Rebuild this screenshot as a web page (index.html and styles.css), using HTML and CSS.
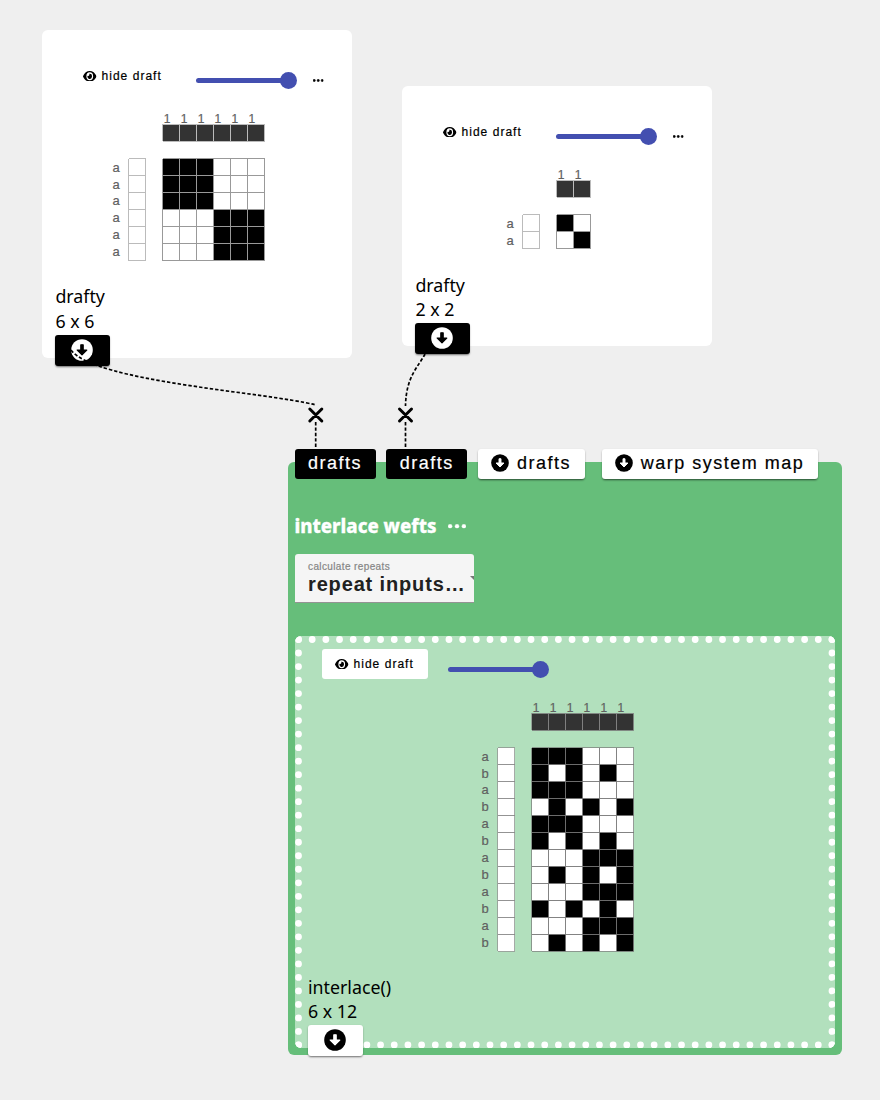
FILE: index.html
```html
<!DOCTYPE html>
<html lang="en">
<head>
<meta charset="utf-8">
<title>Draft workspace</title>
<link rel="stylesheet" href="styles.css">
</head>
<body>
<svg class="symbols" aria-hidden="true">
  <symbol id="eye" viewBox="0 64 576 384" preserveAspectRatio="none"><path d="M572.52 241.4C518.29 135.59 410.93 64 288 64S57.68 135.64 3.48 241.41a32.35 32.35 0 0 0 0 29.19C57.71 376.41 165.07 448 288 448s230.32-71.64 284.52-177.41a32.35 32.35 0 0 0 0-29.19zM288 400a144 144 0 1 1 144-144 143.93 143.93 0 0 1-144 144zm0-240a95.31 95.31 0 0 0-25.31 3.79 47.85 47.85 0 0 1-66.9 66.9A95.78 95.78 0 1 0 288 160z"/></symbol>
  <symbol id="down" viewBox="0 0 22 22"><circle class="disc" cx="11" cy="11" r="10.8"/><path class="arrow" d="M9.8 5.8h2.4v5.2h3.6L11 15.9l-4.8-4.9h3.6z"/></symbol>
  <symbol id="dots" viewBox="0 0 18 4"><circle cx="2.1" cy="2" r="2"/><circle cx="9" cy="2" r="2"/><circle cx="15.9" cy="2" r="2"/></symbol>
</svg>
<main class="workspace">
  <section class="node draft-card first">
    <div class="toolbar">
      <button class="toggle"><svg class="eye"><use href="#eye"/></svg>hide draft</button>
      <div class="slider"><i class="thumb"></i></div>
      <svg class="more"><use href="#dots"/></svg>
    </div>
    <svg class="draft" data-rows="111000 111000 111000 000111 000111 000111" data-labels="a"></svg>
    <footer class="info"><div>drafty</div><div>6 x 6</div><button class="outlet dark"><svg class="down"><use href="#down"/></svg></button></footer>
  </section>

  <section class="node draft-card second">
    <div class="toolbar">
      <button class="toggle"><svg class="eye"><use href="#eye"/></svg>hide draft</button>
      <div class="slider"><i class="thumb"></i></div>
      <svg class="more"><use href="#dots"/></svg>
    </div>
    <svg class="draft" data-rows="10 01" data-labels="a"></svg>
    <footer class="info"><div>drafty</div><div>2 x 2</div><button class="outlet dark"><svg class="down"><use href="#down"/></svg></button></footer>
  </section>

  <section class="node operation">
    <div class="inlets">
      <button class="inlet dark">drafts</button>
      <button class="inlet dark">drafts</button>
      <button class="inlet"><svg class="down"><use href="#down"/></svg>drafts</button>
      <button class="inlet map"><svg class="down"><use href="#down"/></svg>warp system map</button>
    </div>
    <h1 class="title">interlace wefts<svg class="more"><use href="#dots"/></svg></h1>
    <div class="select"><span class="label">calculate repeats</span><span class="value">repeat inputs…</span><i class="caret"></i></div>
    <div class="result">
      <svg class="dotted" viewBox="0 0 540.5 412.5"><path d="M3.5 3.5H537" stroke-dasharray="0 13.679"/><path d="M3.5 409H537" stroke-dasharray="0 13.679"/><path d="M3.5 3.5V409" stroke-dasharray="0 13.516"/><path d="M537 3.5V409" stroke-dasharray="0 13.516"/></svg>
      <div class="toolbar">
        <button class="toggle"><svg class="eye"><use href="#eye"/></svg>hide draft</button>
        <div class="slider"><i class="thumb"></i></div>
      </div>
      <svg class="draft" data-rows="111000 101010 111000 010101 111000 101010 000111 010101 000111 101010 000111 010101" data-labels="ab"></svg>
      <footer class="info"><div>interlace()</div><div>6 x 12</div><button class="outlet"><svg class="down"><use href="#down"/></svg></button></footer>
    </div>
  </section>

  <svg class="wires" viewBox="0 0 880 1100">
    <path class="wire" d="M71 350C95 382 265 392 316 405M315.7 422V448M425 354C419 366 406 376 405.5 406M405.5 422V448"/>
    <path class="cross" d="M309.8 409l12 12m0-12l-12 12M399.5 409l12 12m0-12l-12 12"/>
  </svg>
</main>
<script src="draft.js"></script>
</body>
</html>
```
FILE: styles.css
```css
* { box-sizing: border-box; }
body { margin: 0; background: #efefef; color: #000; font-family: "Noto Sans", sans-serif; }
button { border: 0; padding: 0; margin: 0; font-family: "Liberation Sans", Arial, sans-serif; color: #000; display: flex; align-items: center; background: #fff; -webkit-text-stroke: .2px currentColor; }
.symbols { position: absolute; width: 0; height: 0; }
.workspace { position: relative; width: 880px; height: 1100px; overflow: hidden; }
.node { position: absolute; display: flex; flex-direction: column; }
.draft-card { width: 309.5px; background: #fff; border-radius: 6px; }
.first { left: 42px; top: 30px; height: 328px; }
.second { left: 402px; top: 86px; height: 260px; }
.draft-card .toolbar { height: 83px; padding: 39px 0 0 41px; display: flex; align-items: flex-start; }
.toggle { font-size: 12px; letter-spacing: 1.03px; line-height: 14px; white-space: nowrap; }
.eye { width: 13.5px; height: 10.7px; margin-right: 5px; flex: none; }
.draft-card .toggle { width: 112.5px; }
.slider { width: 92.5px; height: 5px; border-radius: 3px; background: #434fb0; position: relative; flex: none; }
.thumb { position: absolute; right: -8.5px; top: -6px; width: 17px; height: 17px; border-radius: 50%; background: #434fb0; }
.draft-card .slider { margin-top: 9px; }
.draft-card .more { width: 10.5px; height: 3px; margin: 9.5px 0 0 24.8px; stroke: #000; stroke-width: .8px; overflow: visible; }
.draft { display: block; flex: none; overflow: visible; }
.first .draft { margin-left: 71px; }
.second .draft { margin-left: 105px; }
.draft text { font-family: "Liberation Sans", Arial, sans-serif; fill: #606060; stroke: #606060; stroke-width: .2px; }
.draft .count { font-size: 12px; }
.draft .system { font-size: 13px; }
.draft .warp { fill: #333; }
.draft .weft { fill: #fff; }
.draft .grid { fill: none; stroke: #999; stroke-width: 1; shape-rendering: crispEdges; }
.draft .frame { fill: none; stroke: #bbb; stroke-width: 1; shape-rendering: crispEdges; }
.info { margin-top: auto; font-size: 17.8px; line-height: 24.5px; }
.draft-card .info { margin-left: 13.4px; margin-bottom: -7.6px; }
.second .info { line-height: 24px; }
.outlet { width: 54.5px; height: 30.5px; margin-top: 2px; border-radius: 3px; justify-content: center; box-shadow: 0 2px 2px -1px #0005, 0 1px 2px #0004; }
.outlet .down { width: 22px; height: 22px; margin: 0 1px 1.5px 0; }
.down { --disc: #000; --mark: #fff; flex: none; }
.dark { background: #000; color: #fff; }
.dark .down { --disc: #fff; --mark: #000; }
.disc { fill: var(--disc); }
.arrow { fill: var(--mark); stroke: var(--mark); stroke-width: 1.2; stroke-linejoin: round; }

.operation { left: 288px; top: 462px; width: 554px; height: 593px; padding-left: 6.5px; background: #66be7a; border-radius: 6px; }
.inlets { display: flex; gap: 10.3px; margin-top: -13.5px; }
.inlet { height: 30.5px; padding: 0 13.8px 0 13.5px; border-radius: 3px; font-size: 18px; letter-spacing: 1.5px; white-space: nowrap; }
.inlet:not(.dark) { box-shadow: 0 2px 2px -1px #0006, 0 1px 2px #0004; }
.inlet .down { width: 18px; height: 18px; margin: 0 7.7px 1px 0; }
.map { margin-left: 6.6px; padding-right: 13.5px; }
.title { margin: 34.3px 0 0; height: 26px; font-size: 18.6px; line-height: 26px; font-weight: 800; color: #fff; -webkit-text-stroke: .3px #fff; display: flex; align-items: center; }
.title .more { width: 18px; height: 4.4px; fill: #fff; margin-left: 11.5px; overflow: visible; stroke: #fff; stroke-width: .4px; }
.select { position: relative; overflow: hidden; margin-top: 14.7px; width: 179.5px; height: 49px; padding: 7px 0 0 13.5px; background: #f5f5f5; border-bottom: 1px solid #949494; border-radius: 3px 3px 0 0; font-family: "Liberation Sans", Arial, sans-serif; display: flex; flex-direction: column; }
.label { font-size: 10px; line-height: 12px; letter-spacing: .38px; color: #858585; -webkit-text-stroke: .2px #858585; }
.value { font-size: 20px; line-height: 22px; letter-spacing: .85px; font-weight: 700; color: #212121; white-space: nowrap; }
.caret { position: absolute; left: 175px; top: 22px; border: 4.5px solid transparent; border-top-color: #777; border-bottom: 0; }
.result { position: relative; margin-top: 32.6px; width: 540.5px; height: 412.5px; padding: 7px; border-radius: 6px; background: #b2e0bd; display: flex; flex-direction: column; }
.dotted { position: absolute; inset: 0; width: 540.5px; height: 412.5px; border-radius: 6px; overflow: hidden; fill: none; stroke: #fff; stroke-width: 6.8px; stroke-linecap: round; }
.result .toolbar { height: 59px; padding: 6.3px 0 0 20px; display: flex; align-items: flex-start; }
.result .toggle { width: 106px; height: 30.5px; padding-left: 13.5px; border-radius: 3px; }
.result .slider { margin: 17.7px 0 0 20.5px; }
.result .draft { margin-left: 180.1px; }
.result .grid { stroke: #777; stroke-opacity: .7; }
.result .frame { stroke: #888; stroke-opacity: .7; }
.result .info { position: relative; line-height: 24.2px; margin-left: 6.5px; margin-bottom: -14.9px; }
.wires { position: absolute; inset: 0; width: 880px; height: 1100px; pointer-events: none; }
.wire { fill: none; stroke: #000; stroke-width: 1.7; stroke-dasharray: 3.4 2; }
.cross { fill: none; stroke: #000; stroke-width: 3; stroke-linecap: round; }
```
FILE: draft.js
```js
// Draws each weave draft: warp counts, warp row, weft column and drawdown.
const CELL = 16.93;
const cellPath = (x, y) => `M${x * CELL} ${y * CELL}h${CELL}v${CELL}h${-CELL}z`;

document.querySelectorAll('.draft').forEach((svg) => {
  const rows = svg.dataset.rows.split(' ');
  const labels = svg.dataset.labels;
  const cols = rows[0].length;
  const width = cols * CELL;
  const height = rows.length * CELL;
  let black = '', grid = '', ends = '', picks = '', text = '';
  for (let x = 0; x < cols; x++) {
    ends += cellPath(x, -2.04);
    text += `<text class="count" x="${x * CELL + 0.8}" y="-36.5">1</text>`;
  }
  rows.forEach((row, y) => {
    picks += cellPath(-2.02, y);
    text += `<text class="system" x="-50.5" y="${y * CELL + 12.6}">${labels[y % labels.length]}</text>`;
    [...row].forEach((cell, x) => {
      if (cell === '1') black += cellPath(x, y);
      grid += cellPath(x, y);
    });
  });
  svg.setAttribute('viewBox', `-50 -46 ${width + 50} ${height + 46}`);
  svg.setAttribute('width', width + 50);
  svg.setAttribute('height', height + 46);
  svg.innerHTML = `<rect class="weft" width="${width}" height="${height}"/>
    <path d="${black}"/><path class="grid" d="${grid}"/>
    <path class="warp" d="${ends}"/><path class="frame" d="${ends}"/>
    <path class="weft" d="${picks}"/><path class="frame" d="${picks}"/>${text}`;
});
```
